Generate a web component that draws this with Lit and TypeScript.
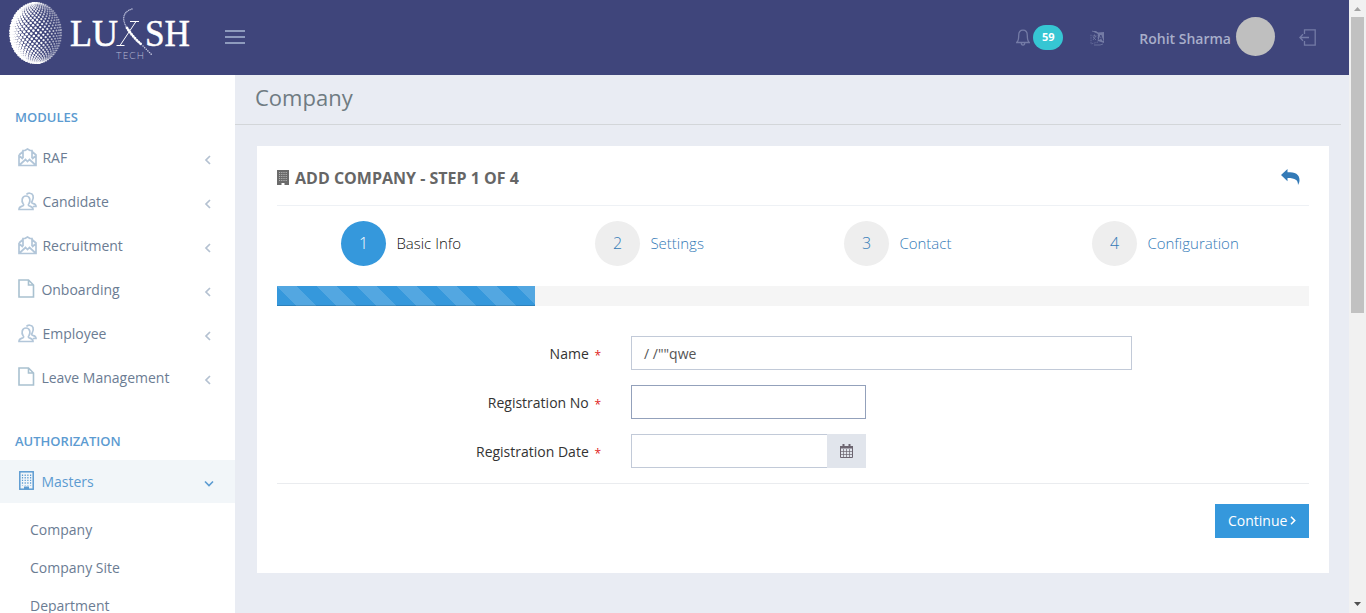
import { LitElement, html, svg, css } from "lit";
import { customElement } from "lit/decorators.js";

const globeDots = () => {
  const out: unknown[] = [];
  const cx = 36, cy = 33, rx = 25.5, ry = 30.5;
  for (let i = -17; i <= 17; i++) {
    const lat = i * 0.089;
    for (let j = -8; j <= 8; j++) {
      const lon = (j + (i & 1 ? 0.5 : 0)) * 0.19;
      if (Math.abs(lon) > 1.55) continue;
      const u = Math.sin(lon) * Math.cos(lat);
      const v = Math.sin(lat);
      const x = cx + rx * (u * 0.99 + v * 0.1);
      const y = cy + ry * (v * 0.99 - u * 0.1);
      const r = (1.7 - (u + 1) * 0.42) * (0.45 + 0.55 * Math.cos(lat));
      const o = Math.min(1, 1.3 - Math.max(0, u) * 0.85 - Math.abs(v) * 0.45);
      out.push(svg`<circle cx=${x.toFixed(2)} cy=${y.toFixed(2)} r=${r.toFixed(2)} opacity=${o.toFixed(2)} />`);
    }
  }
  return out;
};

const icons = {
  mail: svg`<path d="M1 7V17.500h17V7L14.500 4M4.500 4L1 7M5 10V2.500h2L9.500 1 12 2.500h2V10M1 7.500l4 3.500M18 7.500l-4 3.500M1.500 17l6-5.500 2 2 2-2 6 5.500"/>`,
  users: svg`<path d="M1 17.500c0-3 2-3 4-3.700.8-.5.8-1.500 0-2.300C3.500 9.500 3.500 4 8 4s4.500 5.500 3 7.500c-.8.8-.8 1.800 0 2.300 2 .7 4 .7 4 3.700zM8.500 2.500C9.500.800 14 .5 15 3.500c.6 2 .2 4-.8 5.500-.6.9-.6 1.900.3 2.300 1.700.7 3.500.7 3.500 3.200h-3"/>`,
  doc: svg`<path d="M1 1h9.500L15.500 6V18H1zM10.500 1v5h5"/>`,
};

@customElement("app-root")
export class AppRoot extends LitElement {
  static styles = css`
    :host { display: flex; width: 100%; height: 613px; overflow: hidden; font-family: "Open Sans", sans-serif; font-size: 14px; color: #333; background: #e9ecf3; }
    * { box-sizing: border-box; }
    svg { display: block; flex: none; }
    .page { flex: 1; display: flex; flex-direction: column; min-width: 0; }
    header { height: 75px; background: #3f457b; display: flex; align-items: center; flex: none; }
    .brand { width: 225px; }
    .spring { flex: 1; }
    .burger { margin-top: -1px; }
    .badge { background: #36c6d3; color: #fff; font-weight: 700; font-size: 11px; width: 30px; height: 25px; line-height: 24px; border-radius: 13px; text-align: center; margin-left: 3px; }
    .lang { margin-left: 27px; }
    .user { margin-left: 34px; color: #a8aeca; font-weight: 600; font-size: 14px; margin-top: 1px; }
    .avatar { width: 39px; height: 39px; border-radius: 50%; background: #bfbfbf; margin: -2px 0 0 5px; }
    .logout { margin: 0 33px 0 24px; }
    .body { flex: 1; display: flex; min-height: 0; }
    aside { width: 235px; background: #fff; flex: none; overflow: hidden; }
    .heading { color: #5c9bd1; font-size: 13px; font-weight: 600; line-height: 18px; padding: 0 15px; }
    .modules { padding-top: 33px; }
    .auth { margin-top: 32px; margin-bottom: 10px; }
    .items { padding-top: 10px; }
    .item { height: 44px; display: flex; align-items: center; padding: 0 23px 0 18px; color: #6b7c93; }
    .item .label { flex: 1; padding-bottom: 1px; }
    .glyph { fill: none; stroke: #b2c6d9; stroke-width: 1.7; margin: -2px 5.400px 0 0; }
    .glyph.doc { margin: -4px 4.400px 0 0; stroke: #a9c1d0; stroke-width: 1.600; }
    .item .arrow { margin-top: 3px; }
    .item.open { height: 43px; background: #f2f6f9; color: #5c9bd1; padding-right: 21px; }
    .item.open .building { margin: -2px .4px 0 0; }
    .sub { padding: 8px 0 0 30px; color: #6b7c93; }
    .sub div { height: 38px; line-height: 38px; }
    main { flex: 1; min-width: 0; }
    h1 { margin: 0 8px 0 0; height: 50px; padding-left: 20px; border-bottom: 1px solid #d3d6d9; font-size: 22px; font-weight: 400; line-height: 45px; color: #6f7b82; }
    .card { margin: 21px 20px 0 22px; height: 427px; background: #fff; padding: 0 20px; }
    .title { height: 60px; border-bottom: 1px solid #eef1f5; display: flex; align-items: center; font-weight: 700; font-size: 16px; color: #666; padding: 4px 9px 0 0; }
    .title svg { margin-right: 6px; }
    .title span { flex: 1; }
    .title .back { margin-right: 0; margin-top: -2px; }
    .steps { display: grid; grid-template-columns: 254px 249px 248px 1fr; height: 80px; padding: 15px 0 0 64px; }
    .step { display: flex; align-items: center; height: 45px; font-size: 15px; font-weight: 300; color: #337ab7; gap: 10px; }
    .step .caption { padding: 0 0 2px .4px; }
    .num { width: 45px; height: 45px; border-radius: 50%; background: #eee; font-size: 16px; line-height: 45px; text-align: center; }
    .step.on { color: #111; }
    .step.on .num { background: #3598dc; color: #fff; }
    .progress { height: 20px; background: #f5f5f5; }
    .bar { height: 20px; width: 25%; background: #3598dc linear-gradient(45deg, rgba(255,255,255,.15) 25%, transparent 25%, transparent 50%, rgba(255,255,255,.15) 50%, rgba(255,255,255,.15) 75%, transparent 75%, transparent) 0 0 / 40px 40px; box-shadow: inset 0 -1px 0 rgba(0,0,0,.15); }
    .form { padding-top: 30px; height: 178px; border-bottom: 1px solid #eaecef; }
    .row { display: flex; height: 34px; margin-bottom: 15px; }
    .row label { width: 324px; margin-right: 30px; text-align: right; padding-top: 8px; line-height: 20px; }
    .req { color: #e02222; font-size: 12px; padding-left: 2px; line-height: 1; vertical-align: -1px; }
    .input { height: 34px; border: 1px solid #c2cad8; padding: 7px 12px; line-height: 20px; color: #555; width: 235px; }
    .input.wide { width: 501px; }
    .input.focus { border-color: #93a1bb; }
    .input.date { width: 196px; border-right: 0; }
    .cal { width: 39px; background: #e1e5ec; padding: 10px 0 0 13px; }
    .btn { display: flex; align-items: center; margin: 20px 0 0 auto; width: 94px; height: 34px; background: #3598dc; color: #fff; padding: 0 0 1px 13px; gap: 3px; }
    .scroll { width: 17px; background: #f1f1f1; flex: none; display: flex; flex-direction: column; align-items: center; padding: 0 2px; }
    .thumb { width: 13px; height: 296px; background: #c1c1c1; }
  `;

  item(icon: "mail" | "users" | "doc", label: string) {
    return html`<div class="item">
      <svg class="glyph ${icon}" width="19" height="19" viewBox="0 0 19 19">${icons[icon]}</svg>
      <span class="label">${label}</span>
      <svg class="arrow" width="9" height="10" viewBox="0 0 9 10"><path d="M7 1L3 5l4 4" fill="none" stroke="#b4c1d1" stroke-width="1.700"/></svg>
    </div>`;
  }

  row(label: string, field: unknown) {
    return html`<div class="row"><label>${label} <span class="req">*</span></label>${field}</div>`;
  }

  render() {
    return html`
      <div class="page">
        <header>
          <svg class="brand" width="225" height="75" viewBox="0 0 225 75" fill="#fff">
            ${globeDots()}
            <g font-family="Liberation Serif, serif" font-size="37.500" stroke="#fff" stroke-width=".5">
              <text x="70" y="46" textLength="48" lengthAdjust="spacingAndGlyphs">LU</text>
              <text x="145" y="46" textLength="45" lengthAdjust="spacingAndGlyphs">SH</text>
            </g>
            <path d="M120 45.500L136 21.500M116.500 45.500h8M130 21.500h9" fill="none" stroke="#fff" stroke-width="1"/>
            <g fill="none" stroke-linecap="round">
              <path d="M132 9C122 12 122 20 127 28" stroke="#b9bdd8" stroke-width="1.400" stroke-dasharray=".1 1.700"/>
              <path d="M127 28C131 34 136 40 142 45" stroke="#fff" stroke-width="2.800" stroke-dasharray=".1 2.500"/>
              <path d="M143 46L152 55" stroke="#c5c8df" stroke-width="1.500" stroke-dasharray=".1 2.200"/>
            </g>
            <text x="116" y="59" font-family="Lato, sans-serif" font-weight="300" font-size="9.500" textLength="28" fill="#b9bcd4">TECH</text>
          </svg>
          <svg class="burger" width="20" height="14" viewBox="0 0 20 14"><path d="M0 1h20M0 7h20M0 13h20" stroke="#8e9bbd" stroke-width="2"/></svg>
          <div class="spring"></div>
          <svg width="14" height="17" viewBox="0 0 14 17"><path d="M.7 13.500c1.800-1.500 2-3 2-7C2.700 3 4.500 1.200 7 1.200S11.300 3 11.300 6.500c0 4 .2 5.500 2 7zM5.300 14c0 2.700 3.400 2.700 3.400 0" fill="none" stroke="#747ba6" stroke-width="1.300"/></svg>
          <div class="badge">59</div>
          <svg class="lang" width="15" height="16" viewBox="0 0 15 16"><path d="M2 1l6 2v9l-7 2V4" fill="none" stroke="#666c9b" stroke-dasharray="1 .7"/><path d="M2 1h4l2 1.500 6-.5v11l-6-2V4z" fill="#747ba5"/><path d="M9 10l1.800-5L13 11M9.600 8.500l2.700.500" fill="none" stroke="#3f457b"/><path d="M2.500 6h4M4.500 4.500v1.500M3 10l3-4M3 7l3 3M4 15h6l3-1" fill="none" stroke="#747ba5" stroke-width=".8"/></svg>
          <div class="user">Rohit Sharma</div>
          <div class="avatar"></div>
          <svg class="logout" width="17" height="17" viewBox="0 0 17 17"><path d="M5.500 5V.800h10.700v15.400H5.500V12M.800 8.500H10M4 5.200L.800 8.500 4 11.800" fill="none" stroke="#747ba6" stroke-width="1.300"/></svg>
        </header>
        <div class="body">
          <aside>
            <div class="heading modules">MODULES</div>
            <div class="items">
              ${this.item("mail", "RAF")}${this.item("users", "Candidate")}${this.item("mail", "Recruitment")}
              ${this.item("doc", "Onboarding")}${this.item("users", "Employee")}${this.item("doc", "Leave Management")}
            </div>
            <div class="heading auth">AUTHORIZATION</div>
            <div class="item open">
              <svg class="building" width="23" height="19" viewBox="0 0 23 19"><rect x="1.800" y=".8" width="13.400" height="17.400" fill="none" stroke="#5c9bd1" stroke-width="1.500"/><path d="M4.500 3.500v11M7.200 3.500v11M9.900 3.500v11M12.600 3.500v11" stroke="#5c9bd1" stroke-width="1.200" stroke-dasharray="1.400 1.200"/><path d="M6 18v-2.500h5V18z" fill="#5c9bd1"/></svg>
              <span class="label">Masters</span>
              <svg class="arrow" width="10" height="7" viewBox="0 0 10 7"><path d="M1 1.500l4 4 4-4" fill="none" stroke="#5c9bd1" stroke-width="1.600"/></svg>
            </div>
            <div class="sub"><div>Company</div><div>Company Site</div><div>Department</div></div>
          </aside>
          <main>
            <h1>Company</h1>
            <section class="card">
              <div class="title">
                <svg width="12" height="15" viewBox="0 0 12 15"><path d="M0 0h12v15H7.500v-2h-3v2H0z" fill="#6b6b6b"/><path d="M2 2.500h8M2 4.500h8M2 6.500h8M2 8.500h8M2 10.500h8" stroke="#b4b4b4" stroke-dasharray="1.200 1"/></svg>
                <span>ADD COMPANY - STEP 1 OF 4</span>
                <svg class="back" width="19" height="16" viewBox="0 0 19 16"><path d="M0 6L6.500 0v3.300C14 3.300 18.500 5 18.500 11c0 2-.6 3.500-1.500 5 0-5-2.500-7-10.500-7v3.300z" fill="#337ab7"/></svg>
              </div>
              <div class="steps">
                ${["Basic Info", "Settings", "Contact", "Configuration"].map((t, i) => html`<div class="step ${i === 0 ? "on" : ""}"><span class="num">${i + 1}</span><span class="caption">${t}</span></div>`)}
              </div>
              <div class="progress"><div class="bar"></div></div>
              <div class="form">
                ${this.row("Name", html`<div class="input wide">/ /""qwe</div>`)}
                ${this.row("Registration No", html`<div class="input focus"></div>`)}
                ${this.row("Registration Date", html`<div class="input date"></div><div class="cal"><svg width="13" height="14" viewBox="0 0 13 14"><path d="M.5 3h12v10.500H.5z" fill="none" stroke="#6c6570"/><path d="M1 7.500h11M1 10.500h11M3.500 5v8M6.500 5v8M9.500 5v8" fill="none" stroke="#6c6570" stroke-width=".7"/><path d="M0 2h13v2.500H0zM2.500 0h2v4h-2zM8.500 0h2v4h-2z" fill="#6c6570"/></svg></div>`)}
              </div>
              <div class="btn">Continue<svg width="6" height="9" viewBox="0 0 6 9"><path d="M1 .8l3.700 3.700L1 8.200" fill="none" stroke="#fff" stroke-width="1.600"/></svg></div>
            </section>
          </main>
        </div>
      </div>
      <div class="scroll">
        <svg width="13" height="17" viewBox="0 0 13 17"><path d="M3 11l3.500-4 3.500 4z" fill="#a3a3a3"/></svg>
        <div class="thumb"></div>
        <div class="spring"></div>
        <svg width="13" height="17" viewBox="0 0 13 17"><path d="M3 6l3.500 4L10 6z" fill="#505050"/></svg>
      </div>`;
  }
}
